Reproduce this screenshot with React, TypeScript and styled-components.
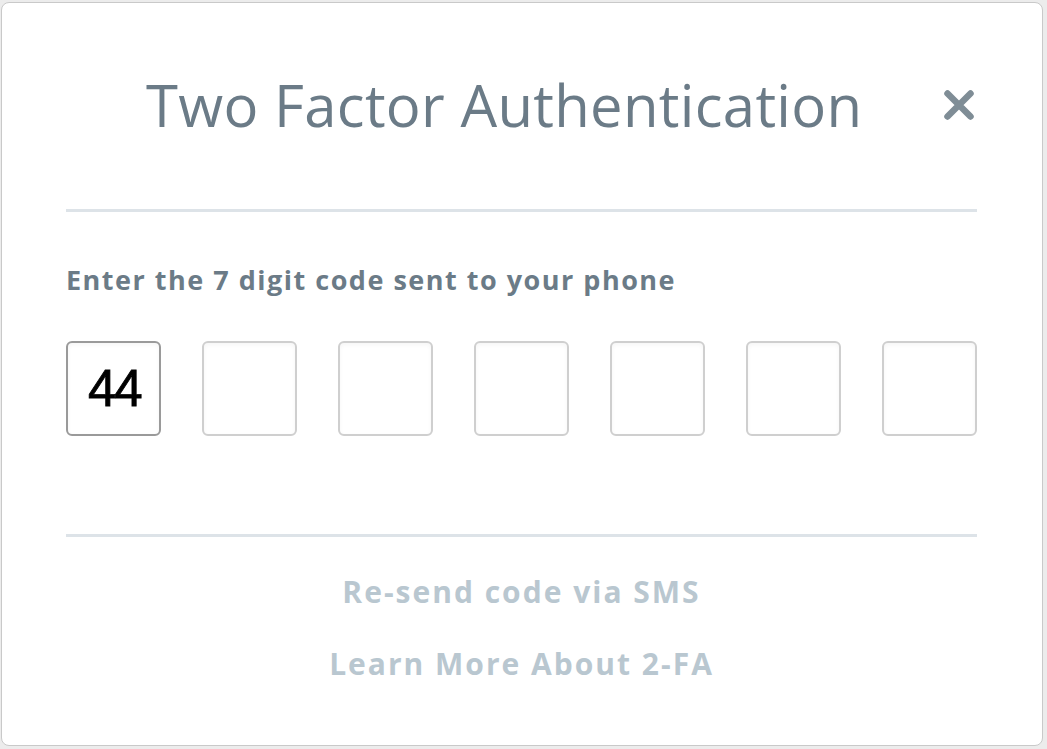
import { useState } from "react";
import styled, { createGlobalStyle } from "styled-components";

const GlobalStyle = createGlobalStyle`
  html, body {
    margin: 0;
    padding: 0;
    background: #ececec;
  }
  body {
    padding: 2px 4px 3px 1px;
    font-family: "Open Sans", "Noto Sans", sans-serif;
  }
`;

const Card = styled.div`
  box-sizing: border-box;
  height: 744px;
  background: #fff;
  border: 1px solid #c9c9c9;
  border-radius: 8px;
  padding: 0 65px 0 64px;
  display: flex;
  flex-direction: column;
`;

const Header = styled.div`
  height: 206px;
  display: flex;
  align-items: flex-start;
  justify-content: space-between;
  padding-left: 80px;
  box-sizing: border-box;
`;

const Title = styled.h1`
  margin: 62px 0 0;
  font-size: 58px;
  font-weight: 400;
  color: #6b7b87;
  letter-spacing: 0.3px;
`;

const Close = styled.button`
  margin-top: 86px;
  margin-right: 2px;
  width: 32px;
  height: 32px;
  padding: 0;
  border: none;
  background: none;
  cursor: pointer;
`;

const Divider = styled.hr`
  margin: 0;
  border: none;
  height: 3px;
  background: #dde3e8;
`;

const Label = styled.p`
  margin: 49px 0 0;
  font-size: 27px;
  font-weight: 700;
  color: #6b7b87;
  letter-spacing: 1.5px;
`;

const Inputs = styled.div`
  margin-top: 43px;
  display: grid;
  grid-template-columns: repeat(7, 95px);
  justify-content: space-between;
`;

const CodeBox = styled.input<{ $filled: boolean }>`
  box-sizing: border-box;
  width: 95px;
  height: 95px;
  border-radius: 6px;
  border: 2px solid ${(p) => (p.$filled ? "#9a9a9a" : "#cfcfcf")};
  box-shadow: inset 0 2px 4px rgba(0, 0, 0, 0.04);
  padding: 0 0 0 20px;
  font-family: "Liberation Sans", Arial, sans-serif;
  font-size: 51px;
  letter-spacing: -2px;
  -webkit-text-stroke: 0.8px #000;
  color: #000;
  background: #fff;
  outline: none;
`;

const Bottom = styled.div`
  margin-top: 98px;
`;

const Links = styled.div`
  display: flex;
  flex-direction: column;
  align-items: center;
  gap: 31px;
  margin-top: 34px;
`;

const LinkText = styled.a`
  font-size: 30px;
  font-weight: 700;
  color: #b9c7d0;
  letter-spacing: 2px;
  text-decoration: none;
  cursor: pointer;
`;

export default function App() {
  const [code, setCode] = useState<string[]>(["44", "", "", "", "", "", ""]);

  return (
    <>
      <GlobalStyle />
      <Card>
        <Header>
          <Title>Two Factor Authentication</Title>
          <Close aria-label="close">
            <svg width="32" height="32" viewBox="0 0 32 32">
              <path
                d="M4.5 4.5 L27.5 27.5 M27.5 4.5 L4.5 27.5"
                stroke="#7f8d96"
                strokeWidth="6.5"
                strokeLinecap="round"
              />
            </svg>
          </Close>
        </Header>
        <Divider />
        <Label>Enter the 7 digit code sent to your phone</Label>
        <Inputs>
          {code.map((v, i) => (
            <CodeBox
              key={i}
              $filled={i === 0}
              value={v}
              onChange={(e) => {
                const next = [...code];
                next[i] = e.target.value;
                setCode(next);
              }}
            />
          ))}
        </Inputs>
        <Bottom>
          <Divider />
          <Links>
            <LinkText>Re-send code via SMS</LinkText>
            <LinkText>Learn More About 2-FA</LinkText>
          </Links>
        </Bottom>
      </Card>
    </>
  );
}
